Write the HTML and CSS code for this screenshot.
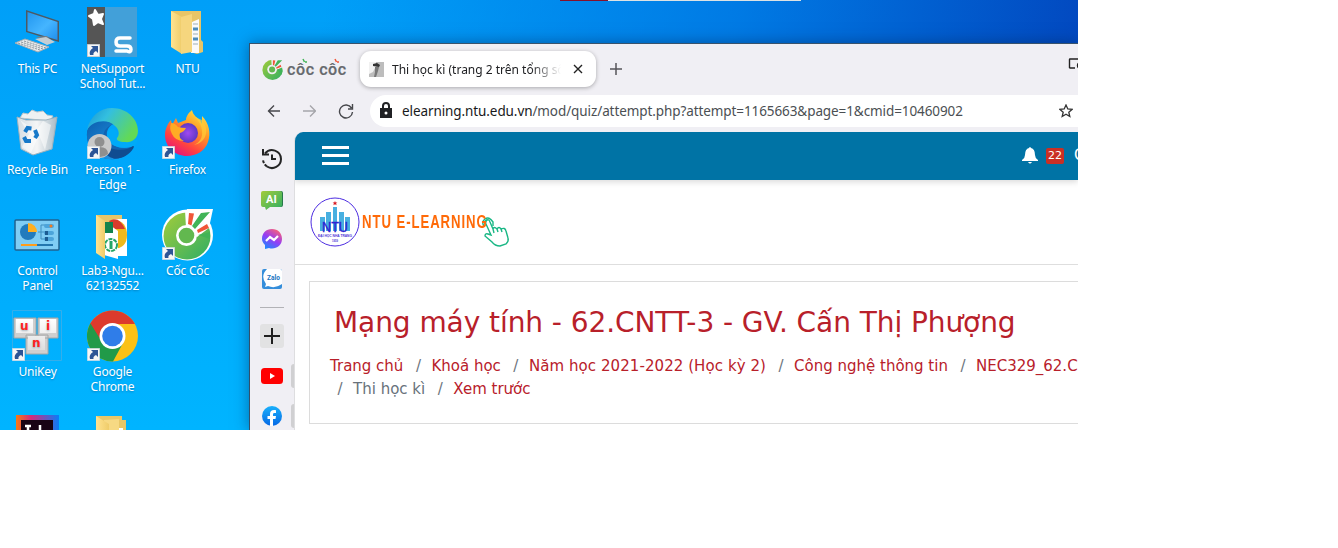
FILE: index.html
```html
<!DOCTYPE html>
<html lang="vi">
<head>
<meta charset="utf-8">
<title>Thi học kì</title>
<link rel="stylesheet" href="styles.css">
</head>
<body>
<svg class="defs" width="0" height="0">
  <defs>
    <symbol id="shortcut" viewBox="0 0 13 13"><path fill="#f6f6f6" stroke="#c8d4dc" stroke-width=".6" d="M.3.3h12.4v12.4H.3z"/><path fill="#2d5596" d="M4 2h7v7L9 7c-2 1-3 2-2.500 4H3C2 8 3 6 6 4z"/></symbol>
    <linearGradient id="scr" x2="1" y2="1"><stop stop-color="#2196f0"/><stop offset=".55" stop-color="#45b5ff"/><stop offset="1" stop-color="#1f8fee"/></linearGradient>
    <linearGradient id="fold" x2="1" y2="0"><stop stop-color="#ffe391"/><stop offset="1" stop-color="#efcc6a"/></linearGradient>
    <linearGradient id="edgeTop" x1="0" x2="1" y2=".5"><stop stop-color="#1793d2"/><stop offset=".4" stop-color="#33bfe0"/><stop offset="1" stop-color="#62d957"/></linearGradient>
    <linearGradient id="edgeMid" x1="0" y1="0" x2=".6" y2="1"><stop stop-color="#0d5fae"/><stop offset="1" stop-color="#1c8ede"/></linearGradient>
    <linearGradient id="fox" x1=".9" y1="0" x2=".3" y2="1"><stop stop-color="#fff04a"/><stop offset=".4" stop-color="#ff9a26"/><stop offset=".75" stop-color="#ff4141"/><stop offset="1" stop-color="#e5147c"/></linearGradient>
    <radialGradient id="globe"><stop stop-color="#a04af0"/><stop offset="1" stop-color="#5d38c4"/></radialGradient>
    <linearGradient id="coc" x1="0" y1="0" x2="1" y2="1"><stop stop-color="#a3cc3a"/><stop offset="1" stop-color="#2fae64"/></linearGradient>
    <linearGradient id="mess" x1=".2" y1="1" x2=".8" y2="0"><stop stop-color="#168cff"/><stop offset=".5" stop-color="#963cf5"/><stop offset="1" stop-color="#ff6470"/></linearGradient>
    <linearGradient id="ij" x2="1" y2="0"><stop stop-color="#f97a12"/><stop offset=".35" stop-color="#d42a7c"/><stop offset="1" stop-color="#087cfa"/></linearGradient>
    <linearGradient id="fb" x2="0" y2="1"><stop stop-color="#1ab0fb"/><stop offset="1" stop-color="#0668e5"/></linearGradient>
    <linearGradient id="bin" x2="1" y2="0"><stop stop-color="#d4dde3"/><stop offset=".5" stop-color="#f4f5f6"/><stop offset="1" stop-color="#a9bac5"/></linearGradient>
    <linearGradient id="key" x2="0" y2="1"><stop stop-color="#ffffff"/><stop offset="1" stop-color="#dedede"/></linearGradient>
    <symbol id="cocmark" viewBox="0 0 52 52">
      <circle cx="26" cy="27" r="25" fill="url(#coc)"/>
      <path fill="#f0eff4" d="M24 19 23 0h29v20L35 28z"/>
      <circle cx="25" cy="26" r="12" fill="#f0eff4"/><circle cx="25" cy="26" r="7.500" fill="#62b84f"/>
      <path fill="#f05638" d="m27 3 6 1-3 12-3-1zM35 21l11-7 2 5-12 5z"/>
      <path fill="#41b457" d="m31 17 8-14h11L34 19zM37 26l12-3 2 8-3 8z"/>
    </symbol>
  </defs>
</svg>
<main class="screen">
  <div class="remote-bar"></div>
  <section class="desktop">
    <div class="shortcut"><svg class="icon" viewBox="0 0 52 52"><path fill="#4d5963" d="m15 3 33 11v21L15 25z"/><path fill="url(#scr)" d="m16.500 5 30 10v18l-30-9z"/><path fill="#74818b" d="m25 30 10 4 5-1-4-4z"/><path fill="#c5ced4" d="m24 32 11-2 9 5-8 3z"/><path fill="#e7e9eb" stroke="#a3adb4" d="m4 36 10-4 24 8-11 5z"/><path stroke="#8a959c" stroke-dasharray="2 1" d="m7 36 22 7M10 35l22 7M13 34l22 7"/></svg><span>This PC</span></div>
    <div class="shortcut"><svg class="icon" viewBox="0 0 52 52"><path fill="#42a0d9" d="M1 0h50v50H1z"/><path fill="#555" d="M1 0h18v50H1z"/><path fill="#fff" stroke="#fff" stroke-width="2" stroke-linejoin="round" d="m9 3 3 5 5-1-2 5 2 5-5-2-4 3-1-6-4-3 5-2z"/><path fill="none" stroke="#fff" stroke-width="3.500" stroke-linecap="round" stroke-linejoin="round" d="M44 31H34q-4 0-4 4t4 4h7q4 0 4 3.500T41 44H30"/><use href="#shortcut" x="1" y="37" width="13" height="13"/></svg><span>NetSupport School Tut...</span></div>
    <div class="shortcut"><svg class="icon" viewBox="-1 0 52 52"><path fill="#e8c567" d="M9 4h30v29l2 2v10l-6 2L9 39z"/><path fill="#fafafa" d="m30 15 7-3v34h-8z"/><path stroke="#4d8bb9" stroke-width="3" d="M31 22h5M31 32h5"/><path stroke="#9daeb8" d="M31 17h5M31 27h5M31 37h5"/><path fill="url(#fold)" d="m9 4 11 6v37L9 40z"/><path fill="#f6d67e" d="m19 10 11-3v38l-11 2z"/></svg><span>NTU</span></div>
    <div class="shortcut"><svg class="icon" viewBox="0 0 52 52"><path fill="#edf1f2" stroke="#b8c5cb" d="m9 10 3-5 5 1 4-4 5 2 6-1 4 4 6 1-3 5z"/><path fill="url(#bin)" stroke="#9db1bd" d="m6 9 9 3h20l11-3-5 32-19 6-12-6z"/><path fill="#fff" opacity=".55" d="m9 12 9 14-7 13 9 6 8-18 6 15 6-25-8-4-7 10z"/><g fill="none" stroke="#1779c9" stroke-width="4"><path d="m14 24 2.500-4 4 .500M24 22l2 5-2 3M20 33h-5l-2-4"/></g></svg><span>Recycle Bin</span></div>
    <div class="shortcut"><svg class="icon" viewBox="0 0 52 52"><path fill="#1263b1" d="M1 25C2 14 16 9 27 16c-9 5-8 18 2 22 7 3 13 2 19-.500C42 51 26 54 15 49 6 45 0 36 1 25z"/><path fill="url(#edgeMid)" d="M1 25C2 14 16 9 27 16c-9 3-11 12-10 18 1 7 5 12 11 17C13 53 0 41 1 25z"/><path fill="#00aaf8" d="M31 23q-6-5-9 0-2 7 5 14 9 5 22 1l3-6H38q-8-2-7-9z"/><path fill="#104c91" d="M19 35c5 8 20 9 28 3 1 0 1 1 .500 2C41 51 27 54 20 46z"/><path fill="url(#edgeTop)" d="M1 22C4 8 14 0 26 0c15 0 26 11 26 23 0 8-7 12-13 11-6 0-9-2-8-4 3-3 2-9-2-12C21 10 6 13 1 22z"/><circle cx="13.500" cy="38" r="12" fill="#c9c9c9"/><circle cx="13.500" cy="34" r="5" fill="#8f8f8f"/><path fill="#8f8f8f" d="M5 46q0-7 8.500-7t8.500 7q-7 6-17 0z"/><use href="#shortcut" x="1" y="38" width="13" height="13"/></svg><span>Person 1 - Edge</span></div>
    <div class="shortcut"><svg class="icon" viewBox="0 0 52 52"><path fill="url(#fox)" d="M31 2c1 5 5 8 8 10l2 4V8c7 7 9 17 6 26-3 9-12 14-21 14C14 48 4 39 4 27c0-6 3-12 6-15l1 5 4-7 2 5 8-3q0-5 6-10z"/><circle cx="27" cy="25" r="10" fill="url(#globe)"/><path fill="#ffab24" d="M10 15q4 0 7 4 4 1 8 1-2 4-6 5-2 5 4 8-9 0-12-7-3-5-1-11z"/><path fill="#ffcd38" opacity=".7" d="M31 3c2 8 9 9 10 20 1 7-3 12-8 14 14-3 15-17 8-25-5-2-9-4-10-9z"/><use href="#shortcut" x="1" y="38" width="13" height="13"/></svg><span>Firefox</span></div>
    <div class="shortcut"><svg class="icon" viewBox="0 0 52 52"><rect x="4" y="11" width="44" height="30" rx="1" fill="#80cdf4" stroke="#21618f" stroke-width="1.500"/><circle cx="17" cy="23" r="8" fill="#227bbd"/><path fill="#ffaf20" d="M17 23v-9a9 9 0 0 1 9 9z"/><path fill="none" stroke="#3f8ebf" d="M27 23h7M30 23v-7h6M30 23v7h6"/><path stroke="#4ca4da" stroke-width="4" stroke-linecap="round" d="M35 17h6M35 24h6M35 30h6"/><path stroke="#ff9d1b" stroke-width="2" d="M10 36h16"/><path stroke="#2376af" stroke-width="2" d="M26 36h16"/><circle cx="40" cy="17" r="1.500" fill="#f47b20"/><path fill="#1c5c92" d="M34 22h3v4h-3zM34 28h3v4h-3z"/></svg><span>Control<br>Panel</span></div>
    <div class="shortcut"><svg class="icon" viewBox="0 0 52 52"><path fill="#e8c567" d="M10 6h26v36H10z"/><path fill="#fff" d="M28 10h13v37H28z"/><path fill="#efb91c" d="M28 11q13 1 13 15 0 13-13 14z"/><path fill="#d93c2c" d="M23 12q10-6 16 8H27z"/><path fill="#fff" d="m18 12 10 7 4 3v28l-14-4z"/><path fill="#13834c" d="M19 13h8v11h-8z"/><circle cx="25" cy="36" r="6" fill="none" stroke="#24a567" stroke-width="2" stroke-dasharray="4 1"/><path stroke="#24a567" stroke-width="3" d="M25 32v8"/><path fill="url(#fold)" d="m10 6 9 6v38l-9-6z"/></svg><span>Lab3-Ngu... 62132552</span></div>
    <div class="shortcut"><svg class="icon" viewBox="0 0 52 52"><circle cx="26.500" cy="26" r="25.500" fill="#fff"/><path fill="#fff" d="M26 0h26l-3 14-5 14H26z"/><circle cx="26" cy="27" r="23.500" fill="url(#coc)"/><path fill="#fff" d="M25 19 24 1h27l-3 10v8L36 28z"/><circle cx="25.500" cy="26.500" r="10.500" fill="#fff"/><circle cx="25.500" cy="26.500" r="7.800" fill="#62b84f"/><path fill="#f05638" d="m28 4 5 .500-2.500 12-3.500-1.500zM36 21l10-6 2 4-11 5z"/><path fill="#41b457" d="m31 17 9-13 9-1-15 17zM37 26l12-3 0 7z"/><use href="#shortcut" x="1" y="38" width="13" height="13"/></svg><span>Cốc Cốc</span></div>
    <div class="shortcut"><svg class="icon" viewBox="0 0 52 52"><path fill="none" stroke="#35aeea" d="M1.500.500h49v50h-49z"/><g stroke="#a6a6a6"><path fill="#cfcfcf" d="M3 8h22v20H3zM27 8h20v20H27zM15 25h22v19H15z"/><path fill="url(#key)" stroke="none" d="M5 9h17v14H5zM29 9h16v14H29zM17 26h17v14H17z"/></g><g class="key-letters"><text x="9" y="20">u</text><text x="35" y="20">i</text><text x="21" y="37">n</text></g><use href="#shortcut" x="1" y="38" width="13" height="13"/></svg><span>UniKey</span></div>
    <div class="shortcut"><svg class="icon" viewBox="0 0 52 52"><circle cx="26.500" cy="26" r="25.500" fill="#fbc116"/><path fill="#dc3b2d" d="M4 14a25.500 25.500 0 0 1 45 0H26L15 33z"/><path fill="#219a49" d="M4.400 13.200A25.500 25.500 0 0 0 27 51.500L37 33 16 32z"/><circle cx="26.500" cy="26" r="13" fill="#fff"/><circle cx="26.500" cy="26" r="10.300" fill="#2f7de9"/><use href="#shortcut" x="1" y="38" width="13" height="13"/></svg><span>Google Chrome</span></div>
    <div class="shortcut empty"></div>
    <div class="shortcut"><svg class="icon" viewBox="0 0 52 52"><path fill="url(#ij)" d="M5 4h43v46H5z"/><path fill="#180314" d="M10 9h32v36H10z"/><path fill="none" stroke="#fff" stroke-width="2.500" d="M14 15h6M17 15v12M29 14v13h7"/></svg></div>
    <div class="shortcut"><svg class="icon" viewBox="0 0 52 52"><path fill="#e9c769" d="M10 5h26v4h4v36H10z"/><path fill="#fff" d="M33 17h4v28h-4z"/><path fill="#f7d983" d="m18 9 15-1v40H18z"/><path fill="url(#fold)" d="m10 5 13 8v37l-13-6z"/></svg></div>
  </section>

  <section class="browser">
    <header class="tabs">
      <div class="brand"><svg width="21" height="21"><use href="#cocmark"/></svg><span class="brand-name">côc côc<svg class="sparks" width="60" height="6" viewBox="0 0 60 6"><path stroke="#41b457" d="m16 1 1.500 3M19 3v2"/><path stroke="#f05638" d="m48 1 1.500 3M51 3v2"/></svg></span></div>
      <div class="tab">
        <svg width="15" height="15" viewBox="0 0 15 15"><path fill="#bdbdbd" d="M0 0h15v15H0z"/><path fill="#f1f1f1" d="M0 0h7v4L4 10 0 12z"/><path fill="#333" d="m4 2 4-1 3 2-1 2-6-1z"/><path fill="#777" d="M6 5h4l-1 4-2 6H5l1-5z"/></svg>
        <span class="tab-title">Thi học kì (trang 2 trên tổng số 3)</span>
        <svg class="close" width="10" height="10" viewBox="0 0 10 10"><path d="m1 1 8 8M9 1 1 9"/></svg>
      </div>
      <svg class="new-tab" width="12" height="12" viewBox="0 0 12 12"><path d="M6 0v12M0 6h12"/></svg>
      <svg class="cast" width="16" height="14" viewBox="0 0 16 14"><path d="M7 11H2q-.500 0-.500-.500v-8Q1.500 2 2 2h12M12 11a2.500 2.500 0 1 1 0-5"/></svg>
    </header>
    <nav class="toolbar">
      <svg width="14" height="14" viewBox="0 0 14 14"><path d="M14 7H2M8 1.500 2.500 7 8 12.500"/></svg>
      <svg class="disabled" width="14" height="14" viewBox="0 0 14 14"><path d="M1 7h12M8 1.500 13.500 7 8 12.500"/></svg>
      <svg width="16" height="16" viewBox="0 0 16 16"><path d="M13.500 5a6.500 6.500 0 1 0 1 4M14.500 1v5H10"/></svg>
      <div class="address">
        <svg class="lock" width="14" height="17" viewBox="0 0 14 17"><path fill="#202124" d="M1 6h2V4a4 4 0 0 1 8 0v2h2v10H1zM5 6h4V4a2 2 0 0 0-4 0z"/><circle cx="7" cy="11" r="1.500" fill="#fff"/></svg>
        <span class="url"><b>elearning.ntu.edu.vn</b>/mod/quiz/attempt.php?attempt=1165663&amp;page=1&amp;cmid=10460902</span>
        <svg class="star" width="14" height="14" viewBox="0 0 14 14"><path d="m7 1 1.800 4 4.200.400-3.200 2.800 1 4.300L7 10.200l-3.800 2.300 1-4.300L1 5.400 5.200 5z"/></svg>
      </div>
    </nav>
    <div class="body">
      <aside class="rail">
        <svg class="r-history" width="22" height="22" viewBox="0 0 22 22"><path fill="none" stroke="#252525" stroke-width="2" d="M4 5.500A9 9 0 0 1 20 11a9 9 0 0 1-14 7.500"/><path fill="none" stroke="#252525" stroke-width="2" stroke-dasharray="3 1.500" d="M6 18.500Q2 15.500 2 11"/><path fill="none" stroke="#252525" stroke-width="2" d="M2 1v5.500h6M11 6.500V11h4"/></svg>
        <svg class="r-ai" width="22" height="19" viewBox="0 0 22 19"><path fill="#28774b" d="M4 0h16q2 0 2 2v12q0 2-2 2H7z"/><path fill="url(#coc)" d="M2 0h17q2 0 2 2v12q0 2-2 2H9l-4 3-1-3H2q-2 0-2-2V2q0-2 2-2z"/><text class="ai-text" x="5" y="12">AI</text></svg>
        <svg class="r-mess" width="20" height="20" viewBox="0 0 20 20"><path fill="url(#mess)" d="M10 0c6 0 10 4 10 10 0 7-7 11-13 9l-4 1v-4c-2-2-3-4-3-6C0 4 4 0 10 0z"/><path fill="none" stroke="#fff" stroke-width="2.200" d="m4 12 4-4 4 3 4-4"/></svg>
        <svg class="r-zalo" width="20" height="20" viewBox="0 0 20 20"><rect width="20" height="20" rx="2" fill="#358edb"/><path fill="#fff" d="M5 0h13q2 0 2 2v13q-7 5-14 2l-3 1 1-3Q-2 7 5 0z"/><text class="zalo-text" x="5" y="11">Zalo</text></svg>
        <hr>
        <div class="plus"><svg width="16" height="16" viewBox="0 0 16 16"><path stroke="#202020" stroke-width="2" d="M8 0v16M0 8h16"/></svg></div>
        <div class="site"><svg width="22" height="16" viewBox="0 0 22 16"><rect width="22" height="16" rx="3.500" fill="#f00"/><path fill="#fff" d="m9 5 5 3-5 3z"/></svg></div>
        <div class="site"><svg width="20" height="20" viewBox="0 0 20 20"><circle cx="10" cy="10" r="10" fill="url(#fb)"/><path fill="#fff" d="M8 20v-7H5.500v-3H8V8c0-3 2-4.500 6-3.800V7c-2-.200-3 0-3 1.500V10h3l-.500 3H11v7z"/></svg></div>
      </aside>
      <article class="page">
        <div class="topbar"><div class="menu"><i></i><i></i><i></i></div><svg class="bell" width="16" height="17" viewBox="0 0 16 17"><path fill="#fff" d="M7 1q1-2 2 0 4 1 4 7 0 3 3 5v1H0v-1q3-2 3-5 0-6 4-7zM6 15h4q-2 3-4 0z"/></svg><span class="count">22</span><span class="user">C</span></div>
        <div class="logo">
          <svg class="seal" width="50" height="50" viewBox="0 0 50 50"><circle cx="25" cy="25" r="24" fill="#fff" stroke="#4d2de0"/><path fill="#48afe0" d="M10 20h5v14h-5zM16 15h5v19h-5zM23 10h4v24h-4zM29 15h5v19h-5zM35 20h5v14h-5z"/><path fill="#d71920" d="m25 4 .700 1.500 1.700.100-1.300 1 .500 1.600-1.600-1-1.600 1 .500-1.600-1.300-1 1.700-.100z"/><text class="ntu" x="12" y="35" textLength="26" lengthAdjust="spacingAndGlyphs">NTU</text><text class="motto" x="8" y="40" textLength="34" lengthAdjust="spacingAndGlyphs">ĐẠI HỌC NHA TRANG</text><text class="motto" x="22" y="45" textLength="6" lengthAdjust="spacingAndGlyphs">1959</text></svg>
          <span class="logo-name">NTU E-LEARNING</span>
          <svg class="hand" width="29" height="30" viewBox="0 0 29 30"><path d="M10 18 5 7q-1-3 1-4t3 2l3 7q1-3 4 0 2-3 4 0 4-2 5 2l2 7q1 3-2 6l-6 2q-5 0-8-4l-7-6q0-3 3-2zM12 12l1 4M16 12l1 3M20 12l1 3"/><path d="M3 9Q0 5 4 2t8 3v4M4 7Q3 4 6 3"/></svg>
        </div>
        <div class="card">
          <h1>Mạng máy tính - 62.CNTT-3 - GV. Cấn Thị Phượng</h1>
          <ol class="crumbs"><li>Trang chủ</li><li>Khoá học</li><li class="term">Năm học 2021-2022 (Học kỳ 2)</li><li>Công nghệ thông tin</li><li>NEC329_62.C</li></ol>
          <ol class="crumbs second"><li class="plain">Thi học kì</li><li>Xem trước</li></ol>
        </div>
      </article>
    </div>
  </section>
</main>
</body>
</html>
```
FILE: styles.css
```css
* { box-sizing: border-box; }
body { margin: 0; background: #fff; font-family: "Noto Sans", sans-serif; }
svg { display: block; flex: none; }
.defs { position: absolute; }

.screen {
  position: relative;
  display: flex;
  width: 1078px;
  height: 430px;
  overflow: hidden;
  background:
    linear-gradient(100deg, transparent 30%, rgba(0, 110, 222, .75) 68%, rgba(2, 70, 190, .97) 100%) 0 0 / 1078px 44px no-repeat,
    linear-gradient(#009ff8, #00b4ff);
}
.remote-bar {
  position: absolute;
  left: 560px;
  top: 0;
  width: 241px;
  height: 1px;
  background: linear-gradient(90deg, #85102b 48px, #dce2e4 48px);
}
.desktop {
  display: grid;
  flex: none;
  grid-template-columns: repeat(3, 75px);
  grid-auto-rows: 101px;
  align-content: start;
  width: 249px;
  padding-top: 7px;
}
.shortcut {
  display: flex;
  flex-direction: column;
  align-items: center;
  color: #fff;
  font-size: 12px;
  line-height: 15px;
  text-align: center;
  text-shadow: 0 1px 2px rgba(0, 50, 90, .35);
}
.shortcut span { width: 74px; margin-top: 2px; letter-spacing: -.2px; }
.icon { width: 52px; height: 52px; margin-left: -2px; }
.key-letters { font: bold 12px "DejaVu Sans", sans-serif; fill: #f22; stroke: none; }

.browser {
  display: flex;
  flex: none;
  flex-direction: column;
  width: 829px;
  height: 387px;
  margin-top: 43px;
  border-top: 1px solid #39536c;
  border-left: 1px solid #31506b;
  background: #f0eff4;
  box-shadow: 0 0 14px rgba(0, 40, 90, .5);
}
.tabs { display: flex; align-items: center; height: 50px; padding-left: 12px; }
.brand { display: flex; align-items: center; gap: 4px; width: 98px; }
.brand-name {
  position: relative;
  top: 1px;
  color: #66696d;
  font: 500 16px/20px Roboto, sans-serif;
  letter-spacing: .6px;
  white-space: nowrap;
  -webkit-text-stroke: .2px #66696d;
}
.sparks { position: absolute; left: 0; top: -2px; fill: none; stroke-width: 1.5; }
.tab {
  display: flex;
  align-items: center;
  width: 236px;
  height: 36px;
  padding: 0 13px 0 9px;
  border-radius: 11px;
  background: #fff;
  box-shadow: 0 1px 4px rgba(0, 0, 0, .3);
}
.tab-title {
  flex: none;
  width: 169px;
  margin-left: 8px;
  overflow: hidden;
  color: #202124;
  font-size: 12px;
  white-space: nowrap;
  -webkit-mask-image: linear-gradient(90deg, #000 82%, transparent);
  mask-image: linear-gradient(90deg, #000 82%, transparent);
}
.close { margin-left: 12px; fill: none; stroke: #222; stroke-width: 1.4; }
.new-tab { margin-left: 14px; stroke: #55565a; stroke-width: 1.5; }
.cast { margin: -10px -6px 0 auto; fill: none; stroke: #222; stroke-width: 1.4; }
.toolbar {
  display: flex;
  align-items: center;
  height: 33px;
  gap: 22px;
  padding-left: 16px;
  fill: none;
  stroke: #47484c;
  stroke-width: 1.4;
}
.disabled { stroke: #a5a6aa; }
.address {
  display: flex;
  flex: 1;
  align-items: center;
  height: 32px;
  margin-left: -6px;
  padding: 0 5px 0 9px;
  border-radius: 16px 0 0 16px;
  background: #fff;
}
.lock { stroke: none; }
.url { margin-left: 9px; color: #4b4f53; font-size: 13.5px; letter-spacing: -.09px; white-space: nowrap; }
.url b { color: #18191b; font-weight: 400; }
.star { margin-left: auto; stroke: #333; stroke-width: 1.3; }

.body { display: flex; flex: 1; padding-top: 5px; }
.rail { display: flex; flex: none; flex-direction: column; align-items: center; width: 44px; padding-top: 16px; }
.r-ai { margin-top: 21px; }
.r-mess { margin-top: 19px; }
.r-zalo { margin-top: 20px; }
.rail hr { width: 24px; margin: 18px 0 16px; border: 0; border-top: 1px solid #b2b2b6; }
.ai-text { font: bold 11px Roboto, sans-serif; fill: #fff; }
.zalo-text { font: bold 6.5px Roboto, sans-serif; fill: #1672bf; }
.plus { display: grid; place-items: center; width: 24px; height: 24px; border-radius: 3px; background: #e2e2e3; }
.site { display: grid; place-items: center; position: relative; align-self: stretch; height: 24px; margin-top: 16px; }
.site::after { content: ""; position: absolute; right: 0; top: 0; width: 3px; height: 24px; border-radius: 3px 0 0 3px; background: #d0d0d2; }
.page { flex: 1; min-width: 0; overflow: hidden; border-left: 1px solid #dedee0; border-radius: 9px 0 0; background: #fff; }
.topbar { display: flex; align-items: center; height: 48px; margin-left: -1px; padding-left: 28px; background: #0073a5; box-shadow: 0 2px 6px rgba(0, 0, 0, .15); }
.menu { display: grid; gap: 5px; width: 27px; margin: -2px auto 0 0; }
.menu i { height: 3px; background: #fff; }
.bell { margin: -2px 8px 0 0; }
.count { width: 18px; height: 16px; margin-right: 10px; border-radius: 2px; background: #ca2f25; color: #fff; font: 11px/16px "DejaVu Sans", sans-serif; text-align: center; }
.user { width: 4px; margin-top: -3px; overflow: hidden; color: #fff; font: 15px/20px "DejaVu Sans", sans-serif; }
.logo { display: flex; align-items: center; height: 85px; padding-left: 15px; border-bottom: 1px solid #dedede; }
.ntu { font: 15px "Liberation Sans", sans-serif; fill: #3023d2; stroke: #3023d2; stroke-width: .4; }
.motto { font: bold 4px "Liberation Sans", sans-serif; fill: #4d35d6; }
.logo-name { width: 118px; margin-left: 2px; color: #ff6a08; font: bold 18px/20px "Liberation Sans", sans-serif; letter-spacing: 1.3px; white-space: nowrap; transform: scaleX(.73); transform-origin: left; }
.hand { margin: 19px 0 0 1px; fill: none; stroke: #1ab785; stroke-width: 1.4; }
.card { height: 143px; margin: 16px -2px 0 14px; padding: 21px 0 0 20px; border: 1px solid #dcdcdc; color: #b8202a; font-family: "DejaVu Sans", sans-serif; }
h1 { margin: 0 0 12px 4px; font-size: 28px; font-weight: 400; line-height: 40px; letter-spacing: -.07px; white-space: nowrap; }
.crumbs { display: flex; margin: 0; padding: 0; list-style: none; font-size: 15px; line-height: 23px; white-space: nowrap; }
.crumbs li + li::before, .second li:first-child::before { content: "/"; padding: 0 10.5px 0 12.500px; color: #6d757d; letter-spacing: 0; }
.crumbs .term { letter-spacing: .07px; }
.second li:first-child::before { padding-left: 7.500px; }
.crumbs .plain { color: #68727b; }
```
